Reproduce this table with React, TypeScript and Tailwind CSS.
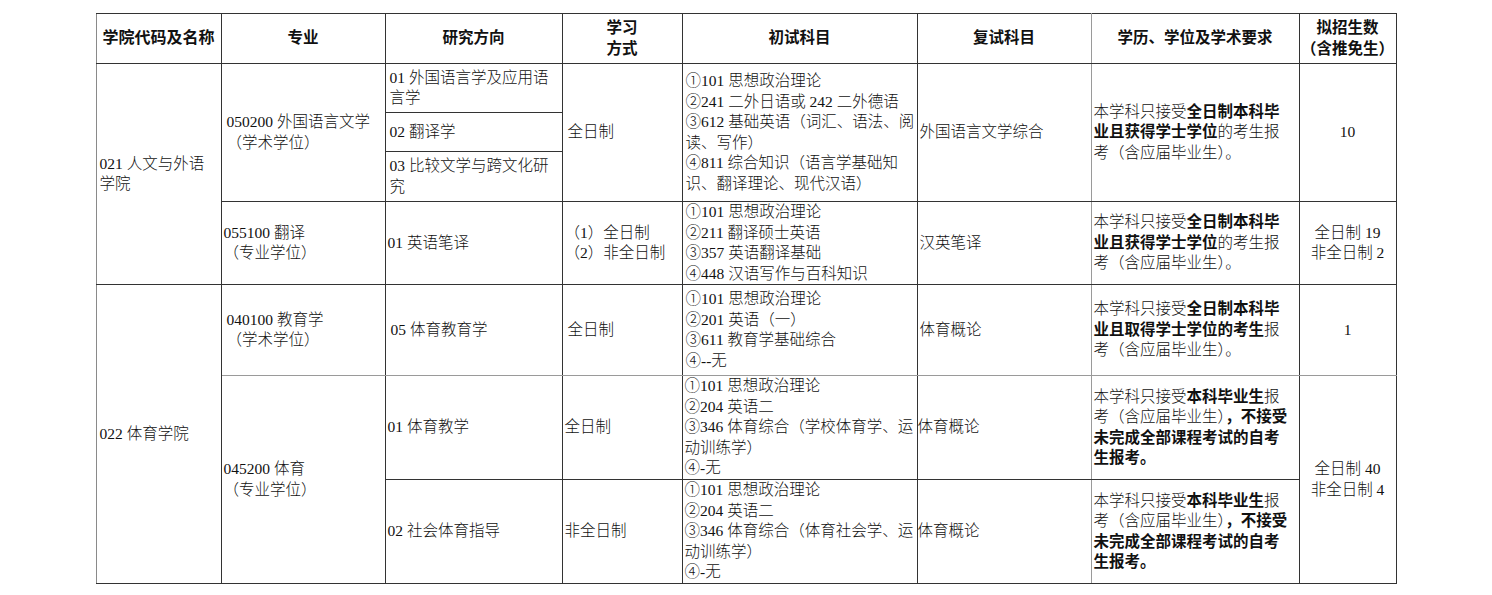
import type { ReactNode } from "react";

const td = "border border-[#333] align-middle py-0 font-light whitespace-nowrap";
const th = "border border-[#333] align-middle py-0 text-center font-bold whitespace-nowrap";
const gap = "border-r-[#9a9a9a]";

const Lines = ({ items }: { items: ReactNode[] }) => (
  <>
    {items.map((line, i) => (
      <div key={i}>{line}</div>
    ))}
  </>
);

const B = ({ children }: { children: ReactNode }) => <span className="font-bold">{children}</span>;

const reqDegree = (verb: string) => [
  <>本学科只接受<B>全日制本科毕</B></>,
  verb === "获得" ? (
    <><B>业且获得学士学位</B>的考生报</>
  ) : (
    <><B>业且取得学士学位的考生</B>报</>
  ),
  "考（含应届毕业生）。",
];

const reqGrad = [
  <>本学科只接受<B>本科毕业生</B>报</>,
  <>考（含应届毕业生）<B>，不接受</B></>,
  <B>未完成全部课程考试的自考</B>,
  <B>生报考。</B>,
];

export default function App() {
  return (
    <div className="min-h-screen bg-white pt-[13px] text-[#111]" style={{ fontFamily: '"Liberation Serif", "Noto Sans CJK SC", serif' }}>
      <table className="mx-auto w-[1300px] table-fixed border-collapse text-[15.5px] leading-[20.5px]">
        <colgroup>
          <col className="w-[125px]" />
          <col className="w-[164px]" />
          <col className="w-[177px]" />
          <col className="w-[120px]" />
          <col className="w-[235px]" />
          <col className="w-[174px]" />
          <col className="w-[208px]" />
          <col className="w-[97px]" />
        </colgroup>
        <thead>
          <tr className="h-[50px]">
            <th className={`${th} border-l-[#8a8a8a] text-[16px]`}>学院代码及名称</th>
            <th className={th}>专业</th>
            <th className={th}>研究方向</th>
            <th className={th}>
              <Lines items={["学习", "方式"]} />
            </th>
            <th className={th}>初试科目</th>
            <th className={`${th} ${gap}`}>复试科目</th>
            <th className={th}>学历、学位及学术要求</th>
            <th className={th}>
              <Lines items={["拟招生数", "（含推免生）"]} />
            </th>
          </tr>
        </thead>
        <tbody>
          <tr className="h-[49px]">
            <td rowSpan={4} className={`${td} border-l-[#8a8a8a] pl-[3px]`}>
              <Lines items={["021 人文与外语", "学院"]} />
            </td>
            <td rowSpan={3} className={`${td} pl-[5px]`}>
              <Lines items={["050200 外国语言文学", "（学术学位）"]} />
            </td>
            <td className={`${td} pl-[4px]`}>
              <Lines items={["01 外国语言学及应用语", "言学"]} />
            </td>
            <td rowSpan={3} className={`${td} pl-[5px]`}>全日制</td>
            <td rowSpan={3} className={`${td} pl-[3px]`}>
              <Lines
                items={[
                  "①101 思想政治理论",
                  "②241 二外日语或 242 二外德语",
                  "③612 基础英语（词汇、语法、阅",
                  "读、写作）",
                  "④811 综合知识（语言学基础知",
                  "识、翻译理论、现代汉语）",
                ]}
              />
            </td>
            <td rowSpan={3} className={`${td} ${gap} pl-[2px]`}>外国语言文学综合</td>
            <td rowSpan={3} className={`${td} pl-[2px]`}>
              <Lines items={reqDegree("获得")} />
            </td>
            <td rowSpan={3} className={`${td} text-center`}>10</td>
          </tr>
          <tr className="h-[39px]">
            <td className={`${td} pl-[4px]`}>02 翻译学</td>
          </tr>
          <tr className="h-[50px]">
            <td className={`${td} pl-[4px]`}>
              <Lines items={["03 比较文学与跨文化研", "究"]} />
            </td>
          </tr>
          <tr className="h-[83px]">
            <td className={`${td} pl-[2px]`}>
              <Lines items={["055100 翻译", "（专业学位）"]} />
            </td>
            <td className={`${td} pl-[2px]`}>01 英语笔译</td>
            <td className={`${td} pl-[2px]`}>
              <Lines items={["（1）全日制", "（2）非全日制"]} />
            </td>
            <td className={`${td} pl-[3px]`}>
              <Lines
                items={["①101 思想政治理论", "②211 翻译硕士英语", "③357 英语翻译基础", "④448 汉语写作与百科知识"]}
              />
            </td>
            <td className={`${td} ${gap} pl-[2px]`}>汉英笔译</td>
            <td className={`${td} pl-[2px]`}>
              <Lines items={reqDegree("获得")} />
            </td>
            <td className={`${td} text-center`}>
              <Lines items={["全日制 19", "非全日制 2"]} />
            </td>
          </tr>
          <tr className="h-[91px]">
            <td rowSpan={3} className={`${td} border-l-[#8a8a8a] pl-[3px]`}>022 体育学院</td>
            <td className={`${td} border-b-[#9a9a9a] pl-[5px]`}>
              <Lines items={["040100 教育学", "（学术学位）"]} />
            </td>
            <td className={`${td} border-b-[#9a9a9a] pl-[5px]`}>05 体育教育学</td>
            <td className={`${td} border-b-[#9a9a9a] pl-[5px]`}>全日制</td>
            <td className={`${td} border-b-[#9a9a9a] pl-[3px]`}>
              <Lines items={["①101 思想政治理论", "②201 英语（一）", "③611 教育学基础综合", "④--无"]} />
            </td>
            <td className={`${td} ${gap} border-b-[#9a9a9a] pl-[2px]`}>体育概论</td>
            <td className={`${td} border-b-[#9a9a9a] pl-[2px]`}>
              <Lines items={reqDegree("取得")} />
            </td>
            <td className={`${td} border-b-[#9a9a9a] text-center`}>1</td>
          </tr>
          <tr className="h-[104px]">
            <td rowSpan={2} className={`${td} pl-[2px]`}>
              <Lines items={["045200 体育", "（专业学位）"]} />
            </td>
            <td className={`${td} pl-[2px]`}>01 体育教学</td>
            <td className={`${td} pl-[2px]`}>全日制</td>
            <td className={`${td} pl-[2px]`}>
              <Lines
                items={["①101 思想政治理论", "②204 英语二", "③346 体育综合（学校体育学、运", "动训练学）", "④-无"]}
              />
            </td>
            <td className={`${td} ${gap} pl-0`}>体育概论</td>
            <td className={`${td} pl-[2px]`}>
              <Lines items={reqGrad} />
            </td>
            <td rowSpan={2} className={`${td} text-center`}>
              <Lines items={["全日制 40", "非全日制 4"]} />
            </td>
          </tr>
          <tr className="h-[104px]">
            <td className={`${td} pl-[2px]`}>02 社会体育指导</td>
            <td className={`${td} pl-[2px]`}>非全日制</td>
            <td className={`${td} pl-[2px]`}>
              <Lines
                items={["①101 思想政治理论", "②204 英语二", "③346 体育综合（体育社会学、运", "动训练学）", "④-无"]}
              />
            </td>
            <td className={`${td} ${gap} pl-0`}>体育概论</td>
            <td className={`${td} pl-[2px]`}>
              <Lines items={reqGrad} />
            </td>
          </tr>
        </tbody>
      </table>
    </div>
  );
}
